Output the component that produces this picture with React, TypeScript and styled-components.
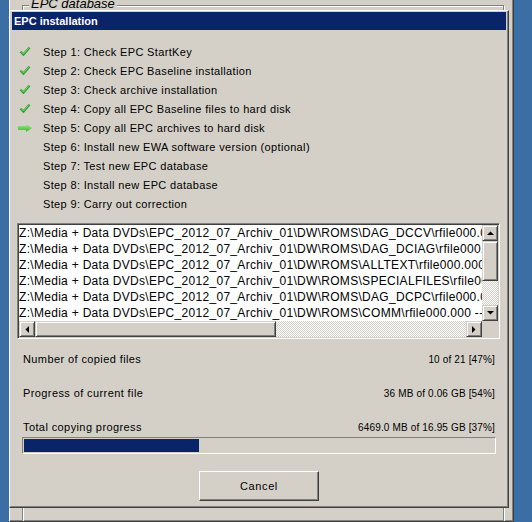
import React from "react";
import styled, { createGlobalStyle } from "styled-components";

const GlobalStyle = createGlobalStyle`
  html, body {
    margin: 0;
    padding: 0;
    background: #3a6ea5;
  }
  body {
    font-family: "Liberation Sans", Arial, sans-serif;
    color: #000;
  }
`;

const GRAY = "#d4d0c8";

const Desktop = styled.div`
  position: relative;
  width: 532px;
  height: 522px;
  overflow: hidden;
  background: #3a6ea5;
`;

const ParentWindow = styled.div`
  position: absolute;
  left: 9px;
  top: 0;
  width: 505px;
  height: 522px;
  box-sizing: border-box;
  background: ${GRAY};
  border-left: 1px solid #fff;
  border-right: 1px solid #404040;
  border-bottom: 1px solid #404040;
  box-shadow: inset -1px -1px #808080;
  overflow: hidden;
`;

const GroupBox = styled.div`
  position: relative;
  margin: 5px 0 0 12px;
  width: 480px;
  height: 600px;
  border: 1px solid #808080;
  box-shadow: inset 1px 1px #fff, 1px 1px #fff;
`;

const GroupLabel = styled.span`
  position: absolute;
  top: -10px;
  left: 6px;
  padding: 0 2px;
  background: ${GRAY};
  font-style: italic;
  font-size: 13px;
  line-height: 15px;
`;

const Dialog = styled.div`
  position: absolute;
  left: 9px;
  top: 10px;
  width: 500px;
  height: 498px;
  box-sizing: border-box;
  background: ${GRAY};
  border-top: 1px solid #fff;
  border-left: 1px solid #fff;
  border-right: 1px solid #404040;
  border-bottom: 1px solid #404040;
  box-shadow: inset -1px -1px #808080;
  padding: 1px 2px 2px 2px;
  display: flex;
  flex-direction: column;
`;

const TitleBar = styled.div`
  height: 18px;
  line-height: 18px;
  padding-left: 2px;
  background: #0a246a;
  color: #fff;
  font-weight: bold;
  font-size: 11px;
`;

const StepList = styled.div`
  margin-top: 12px;
  padding-left: 6px;
  display: flex;
  flex-direction: column;
`;

const StepRow = styled.div`
  height: 19px;
  display: flex;
  align-items: center;
  gap: 11px;
`;

const StepIcon = styled.div`
  width: 14px;
  height: 19px;
  display: flex;
  align-items: center;
  justify-content: center;
`;

const StepText = styled.span`
  font-size: 11px;
  letter-spacing: 0.35px;
  white-space: nowrap;
`;

const ListBox = styled.div`
  margin: 10px 6px 0 5px;
  height: 116px;
  box-sizing: border-box;
  border: 1px solid;
  border-color: #808080 #fff #fff #808080;
  box-shadow: inset 1px 1px #404040, inset -1px -1px ${GRAY};
  padding: 1px;
  display: grid;
  grid-template-columns: 1fr 16px;
  grid-template-rows: 1fr 16px;
  background: ${GRAY};
`;

const ListRows = styled.div`
  background: #fff;
  overflow: hidden;
`;

const ListRow = styled.div`
  height: 16px;
  line-height: 16px;
  font-size: 12px;
  letter-spacing: 0.3px;
  white-space: nowrap;
  overflow: hidden;
`;

const ScrollBar = styled.div<{ $vertical?: boolean }>`
  display: flex;
  flex-direction: ${(p) => (p.$vertical ? "column" : "row")};
  background-color: #fff;
  background-image: repeating-conic-gradient(#fff 0 25%, ${GRAY} 0 50%);
  background-size: 2px 2px;
`;

const Raised = styled.div`
  box-sizing: border-box;
  background: ${GRAY};
  border: 1px solid;
  border-color: ${GRAY} #404040 #404040 ${GRAY};
  box-shadow: inset 1px 1px #fff, inset -1px -1px #808080;
`;

const ScrollButton = styled(Raised)`
  width: 16px;
  height: 16px;
  flex: none;
  display: flex;
  align-items: center;
  justify-content: center;
`;

const Thumb = styled(Raised)<{ $size: number; $vertical?: boolean }>`
  flex: none;
  ${(p) => (p.$vertical ? `height: ${p.$size}px;` : `width: ${p.$size}px;`)}
`;

const Track = styled.div`
  flex: 1;
`;

const Corner = styled.div`
  background: ${GRAY};
`;

const InfoList = styled.div`
  margin-top: 12px;
  padding: 0 11px;
  display: flex;
  flex-direction: column;
  gap: 18px;
`;

const InfoRow = styled.div`
  height: 16px;
  display: flex;
  align-items: center;
  justify-content: space-between;
`;

const InfoLabel = styled.span`
  font-size: 11px;
  letter-spacing: 0.4px;
`;

const InfoValue = styled.span`
  font-size: 10px;
  letter-spacing: 0.15px;
`;

const ProgressTrack = styled.div`
  margin: 2px 10px 0 10px;
  height: 17px;
  box-sizing: border-box;
  border: 1px solid;
  border-color: #808080 #fff #fff #808080;
  padding: 1px;
`;

const ProgressFill = styled.div`
  height: 100%;
  background: #0a246a;
`;

const CancelButton = styled.button`
  margin-top: 17px;
  align-self: center;
  width: 120px;
  height: 30px;
  box-sizing: border-box;
  background: ${GRAY};
  border: 1px solid;
  border-color: #fff #404040 #404040 #fff;
  box-shadow: inset -1px -1px #808080;
  font-family: "Liberation Sans", Arial, sans-serif;
  font-size: 11px;
  letter-spacing: 0.6px;
  color: #000;
  padding: 0;
`;

function CheckIcon() {
  return (
    <svg width="12" height="11" viewBox="0 0 12 11">
      <path d="M1.5 5.5 L4.5 8.5 L10.5 1.5" stroke="#2f9e2f" strokeWidth="2.4" fill="none" />
      <path d="M1.5 5 L4.5 8 L10.5 1" stroke="#7fdc6f" strokeWidth="0.9" fill="none" />
    </svg>
  );
}

function ArrowIcon() {
  return (
    <svg width="14" height="8" viewBox="0 0 14 8">
      <defs>
        <linearGradient id="ag" x1="0" y1="0" x2="0" y2="1">
          <stop offset="0" stopColor="#9cf08c" />
          <stop offset="1" stopColor="#2fb52f" />
        </linearGradient>
      </defs>
      <path d="M0 2 H8 V0 L14 4 L8 8 V6 H0 Z" fill="url(#ag)" />
    </svg>
  );
}

function Triangle({ dir }: { dir: "up" | "down" | "left" | "right" }) {
  const pts = {
    up: "0,4 7,4 3.5,0.5",
    down: "0,0 7,0 3.5,3.5",
    left: "4,0 4,7 0.5,3.5",
    right: "0,0 0,7 3.5,3.5",
  }[dir];
  const vertical = dir === "up" || dir === "down";
  return (
    <svg width={vertical ? 7 : 4} height={vertical ? 4 : 7} viewBox={vertical ? "0 0 7 4" : "0 0 4 7"}>
      <polygon points={pts} fill="#000" />
    </svg>
  );
}

const steps = [
  { text: "Step 1: Check EPC StartKey", state: "done" },
  { text: "Step 2: Check EPC Baseline installation", state: "done" },
  { text: "Step 3: Check archive installation", state: "done" },
  { text: "Step 4: Copy all EPC Baseline files to hard disk", state: "done" },
  { text: "Step 5: Copy all EPC archives to hard disk", state: "current" },
  { text: "Step 6: Install new EWA software version (optional)", state: "todo" },
  { text: "Step 7: Test new EPC database", state: "todo" },
  { text: "Step 8: Install new EPC database", state: "todo" },
  { text: "Step 9: Carry out correction", state: "todo" },
];

const base = "Z:\\Media + Data DVDs\\EPC_2012_07_Archiv_01\\DW\\ROMS\\";
const files = ["DAG_DCCV", "DAG_DCIAG", "ALLTEXT", "SPECIALFILES", "DAG_DCPC", "COMM"].map(
  (dir) => `${base}${dir}\\rfile000.000 --> C:\\EPC\\DW\\ROMS\\${dir}\\rfile000.000`
);

const info = [
  { label: "Number of copied files", value: "10 of 21 [47%]" },
  { label: "Progress of current file", value: "36 MB of 0.06 GB [54%]" },
  { label: "Total copying progress", value: "6469.0 MB of 16.95 GB [37%]" },
];

const totalPercent = 37.2;

export default function App(): React.JSX.Element {
  return (
    <>
      <GlobalStyle />
      <Desktop>
        <ParentWindow>
          <GroupBox>
            <GroupLabel>EPC database</GroupLabel>
          </GroupBox>
        </ParentWindow>
        <Dialog>
          <TitleBar>EPC installation</TitleBar>
          <StepList>
            {steps.map((s) => (
              <StepRow key={s.text}>
                <StepIcon>
                  {s.state === "done" && <CheckIcon />}
                  {s.state === "current" && <ArrowIcon />}
                </StepIcon>
                <StepText>{s.text}</StepText>
              </StepRow>
            ))}
          </StepList>
          <ListBox>
            <ListRows>
              {files.map((f) => (
                <ListRow key={f}>{f}</ListRow>
              ))}
            </ListRows>
            <ScrollBar $vertical>
              <ScrollButton>
                <Triangle dir="up" />
              </ScrollButton>
              <Thumb $vertical $size={40} />
              <Track />
              <ScrollButton>
                <Triangle dir="down" />
              </ScrollButton>
            </ScrollBar>
            <ScrollBar>
              <ScrollButton>
                <Triangle dir="left" />
              </ScrollButton>
              <Thumb $size={241} />
              <Track />
              <ScrollButton>
                <Triangle dir="right" />
              </ScrollButton>
            </ScrollBar>
            <Corner />
          </ListBox>
          <InfoList>
            {info.map((i) => (
              <InfoRow key={i.label}>
                <InfoLabel>{i.label}</InfoLabel>
                <InfoValue>{i.value}</InfoValue>
              </InfoRow>
            ))}
          </InfoList>
          <ProgressTrack>
            <ProgressFill style={{ width: `${totalPercent}%` }} />
          </ProgressTrack>
          <CancelButton>Cancel</CancelButton>
        </Dialog>
      </Desktop>
    </>
  );
}
